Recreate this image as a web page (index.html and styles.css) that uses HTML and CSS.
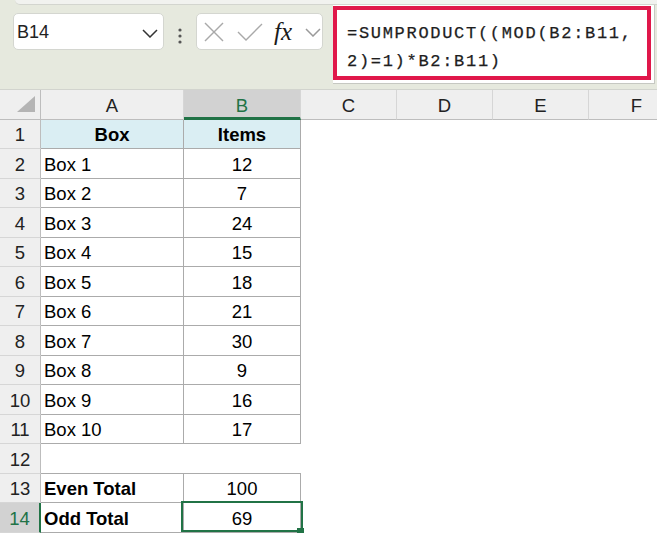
FILE: index.html
```html
<!DOCTYPE html>
<html lang="en">
<head>
    <meta charset="UTF-8">
    <meta name="viewport" content="width=device-width, initial-scale=1.0">
    <title>Odd Total - SUMPRODUCT</title>
    <link rel="stylesheet" href="styles.css">
</head>
<body>

    <div class="topbar">
        <div class="ribbon-edge"></div>
        <div class="formula-row">
            <div class="namebox">
                <span>B14</span>
                <svg class="chev" width="16" height="10" viewBox="0 0 16 10"><polyline points="1,2 8,9 15,2" /></svg>
            </div>
            <div class="more">
                <svg width="6" height="18" viewBox="0 0 6 18"><circle cx="3" cy="3" r="1.6"/><circle cx="3" cy="9" r="1.6"/><circle cx="3" cy="15" r="1.6"/></svg>
            </div>
            <div class="fx-buttons">
                <svg class="icon-x" width="22" height="22" viewBox="0 0 22 22"><line x1="2" y1="2" x2="20" y2="20"/><line x1="20" y1="2" x2="2" y2="20"/></svg>
                <svg class="icon-check" width="28" height="22" viewBox="0 0 28 22"><polyline points="2,11 10,19 26,3"/></svg>
                <span class="fx">fx</span>
                <svg class="chev light" width="16" height="10" viewBox="0 0 16 10"><polyline points="1,2 8,9 15,2" /></svg>
            </div>
            <div class="formula-wrap">
                <div class="formula">=SUMPRODUCT((MOD(B2:B11,<br>2)=1)*B2:B11)</div>
            </div>
        </div>
    </div>

    <div class="sheet">
        <!-- column headers -->
        <div class="corner"><svg width="18" height="16" viewBox="0 0 18 16"><polygon points="18,0 18,16 0,16"/></svg></div>
        <div class="ch">A</div>
        <div class="ch active">B</div>
        <div class="ch">C</div>
        <div class="ch">D</div>
        <div class="ch">E</div>
        <div class="ch">F</div>

        <div class="rh">1</div>
        <div class="c b head bold ctr">Box</div>
        <div class="c b head bold ctr">Items</div>
        <div class="rest"></div>

        <div class="rh">2</div><div class="c b">Box 1</div><div class="c b ctr">12</div><div class="rest"></div>
        <div class="rh">3</div><div class="c b">Box 2</div><div class="c b ctr">7</div><div class="rest"></div>
        <div class="rh">4</div><div class="c b">Box 3</div><div class="c b ctr">24</div><div class="rest"></div>
        <div class="rh">5</div><div class="c b">Box 4</div><div class="c b ctr">15</div><div class="rest"></div>
        <div class="rh">6</div><div class="c b">Box 5</div><div class="c b ctr">18</div><div class="rest"></div>
        <div class="rh">7</div><div class="c b">Box 6</div><div class="c b ctr">21</div><div class="rest"></div>
        <div class="rh">8</div><div class="c b">Box 7</div><div class="c b ctr">30</div><div class="rest"></div>
        <div class="rh">9</div><div class="c b">Box 8</div><div class="c b ctr">9</div><div class="rest"></div>
        <div class="rh">10</div><div class="c b">Box 9</div><div class="c b ctr">16</div><div class="rest"></div>
        <div class="rh">11</div><div class="c b">Box 10</div><div class="c b ctr">17</div><div class="rest"></div>

        <div class="rh">12</div><div class="c under"></div><div class="c under"></div><div class="rest"></div>

        <div class="rh">13</div><div class="c b bold">Even Total</div><div class="c b ctr">100</div><div class="rest"></div>
        <div class="rh active">14</div><div class="c b bold">Odd Total</div><div class="c b ctr selected">69</div><div class="rest"></div>
    </div>

</body>
</html>
```

FILE: styles.css
```css
:root {
    --bar-bg: #e6e9de;
    --head-bg: #efefef;
    --head-active: #d2d2d2;
    --head-line: #d6d6d6;
    --grid-line: #ababab;
    --excel-green: #217346;
    --fill-blue: #daeef3;
    --highlight-red: #e0174a;
}

body {
    margin: 0;
    background: #ffffff;
    font-family: 'Liberation Sans', Arial, sans-serif;
    overflow: hidden;
}

/* formula bar */
.topbar {
    height: 89px;
    background: var(--bar-bg);
    border-bottom: 1px solid #d2d4ce;
}

.ribbon-edge {
    height: 4px;
    margin-left: 15px;
    background: #f1f2ef;
    border-bottom: 1px solid #d3d5cf;
    border-bottom-left-radius: 6px;
}

.formula-row {
    display: flex;
    align-items: flex-start;
}

.namebox {
    display: flex;
    align-items: center;
    box-sizing: border-box;
    width: 151px;
    height: 37px;
    margin: 8px 0 0 13px;
    padding: 2px 5px 0 3px;
    background: #ffffff;
    border: 1px solid #d4d6d0;
    border-radius: 5px;
    font-size: 18px;
    color: #222;
}

.chev {
    margin-left: auto;
    fill: none;
    stroke: #333;
    stroke-width: 1.5;
}

.chev.light {
    margin-left: 5px;
    stroke: #9a9a9a;
}

.more {
    display: flex;
    justify-content: center;
    width: 32px;
    margin-top: 22px;
}

.more svg {
    fill: #555;
}

.fx-buttons {
    display: flex;
    align-items: center;
    box-sizing: border-box;
    width: 127px;
    height: 37px;
    margin-top: 8px;
    padding-left: 6px;
    background: #ffffff;
    border: 1px solid #d4d6d0;
    border-radius: 5px;
}

.icon-x, .icon-check {
    fill: none;
    stroke: #a9a9a9;
    stroke-width: 1.4;
}

.icon-check {
    margin-left: 11px;
}

.fx {
    width: 26px;
    margin-left: 10px;
    font-family: 'Liberation Serif', 'Times New Roman', serif;
    font-style: italic;
    font-size: 25px;
    line-height: 22px;
    color: #1a1a1a;
}

.formula-wrap {
    width: 322px;
    height: 79px;
    margin-left: 10px;
    background: #ffffff;
    border-right: 1px solid #c6c8c2;
    border-bottom: 1px solid #c6c8c2;
    box-sizing: border-box;
    padding-top: 1px;
}

.formula {
    box-sizing: border-box;
    width: 318px;
    height: 74px;
    padding: 10px 0 0 10px;
    border: 4px solid var(--highlight-red);
    font-family: 'Liberation Mono', 'Courier New', monospace;
    font-size: 17px;
    letter-spacing: 1.7px;
    line-height: 28px;
    color: #1e1e1e;
    -webkit-text-stroke: 0.25px #1e1e1e;
    white-space: nowrap;
}

/* worksheet */
.sheet {
    display: grid;
    grid-template-columns: 41px 143px 117px 96px 96px 96px 96px;
    grid-template-rows: 30px repeat(7, 29px 30px);
    font-size: 18.5px;
}

.sheet > div {
    box-sizing: border-box;
    display: flex;
    align-items: center;
    min-width: 0;
    padding-top: 2px;
}

.corner {
    justify-content: flex-end;
    align-items: flex-end !important;
    padding: 0 5px 7px 0 !important;
    background: var(--head-bg);
    border-right: 1px solid #bdbdbd;
    border-bottom: 1px solid #bdbdbd;
}

.corner svg {
    fill: #b4b4b4;
}

.ch {
    justify-content: center;
    background: var(--head-bg);
    border-right: 1px solid var(--head-line);
    border-bottom: 1px solid #bdbdbd;
    color: #222;
}

.ch.active {
    background: var(--head-active);
    color: var(--excel-green);
    border-bottom: 3px solid var(--excel-green);
    padding-top: 4px;
}

.rh {
    justify-content: center;
    background: var(--head-bg);
    border-right: 1px solid #bdbdbd;
    border-bottom: 1px solid var(--head-line);
    color: #222;
}

.rh.active {
    background: var(--head-active);
    color: var(--excel-green);
    border-right: 2px solid var(--excel-green);
}

.rest {
    grid-column: span 4;
}

.c {
    padding-left: 3px;
    color: #000;
    white-space: nowrap;
}

.c.b {
    border-right: 1px solid var(--grid-line);
    border-bottom: 1px solid var(--grid-line);
}

.c.under {
    border-bottom: 1px solid var(--grid-line);
}

.head {
    background: var(--fill-blue);
}

.bold {
    font-weight: bold;
}

.ctr {
    justify-content: center;
    padding-left: 0 !important;
}

.selected {
    position: relative;
}

.selected::after {
    content: "";
    position: absolute;
    left: -3px;
    top: -2px;
    right: -3px;
    bottom: 0;
    border: 2px solid var(--excel-green);
}

.selected::before {
    content: "";
    position: absolute;
    right: -4px;
    bottom: -3px;
    width: 7px;
    height: 7px;
    background: var(--excel-green);
    z-index: 1;
}
```
